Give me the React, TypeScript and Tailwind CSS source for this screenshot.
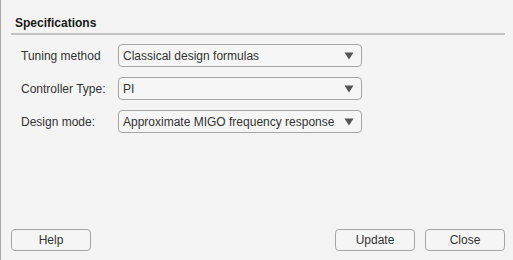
import { ReactNode } from 'react'

const rows = [
  { label: 'Tuning method', value: 'Classical design formulas' },
  { label: 'Controller Type:', value: 'PI' },
  { label: 'Design mode:', value: 'Approximate MIGO frequency response' },
]

function Caret() {
  return (
    <svg width="10" height="8" viewBox="0 0 10 8" className="shrink-0">
      <path d="M0.5 0.5h9L5 7.5z" fill="#555555" />
    </svg>
  )
}

function Dropdown({ value }: { value: string }) {
  return (
    <div className="flex items-center justify-between w-[244px] h-[23px] pl-[4px] pr-[7px] border border-[#a6a6a6] rounded-[4px] bg-[#f6f6f6]">
      <span className="truncate">{value}</span>
      <Caret />
    </div>
  )
}

function Button({ children }: { children: ReactNode }) {
  return (
    <button className="w-[80px] h-[22px] border border-[#a6a6a6] rounded-[4px] bg-[#f5f5f5] text-[#333333] text-[12px] leading-none">
      {children}
    </button>
  )
}

export default function App() {
  return (
    <div
      className="w-[513px] h-[260px] flex flex-col bg-[#f4f4f4] border-l border-[#a8a8a8] text-[#333333] text-[12px]"
      style={{ fontFamily: '"Liberation Sans", Arial, sans-serif' }}
    >
      <div className="ml-[10px] mr-[8px] mt-[15px] pl-[4px] pb-[2px] leading-[16px] font-bold text-[#1a1a1a] border-b-2 border-[#c4c4c4]">
        Specifications
      </div>
      <div className="flex flex-col gap-[10px] mt-[9px] pl-[20px]">
        {rows.map((r) => (
          <div key={r.label} className="flex items-center">
            <span className="w-[97px]">{r.label}</span>
            <Dropdown value={r.value} />
          </div>
        ))}
      </div>
      <div className="flex-1" />
      <div className="flex items-center justify-between pl-[10px] pr-[8px] pb-[9px]">
        <Button>Help</Button>
        <div className="flex gap-[10px]">
          <Button>Update</Button>
          <Button>Close</Button>
        </div>
      </div>
    </div>
  )
}
